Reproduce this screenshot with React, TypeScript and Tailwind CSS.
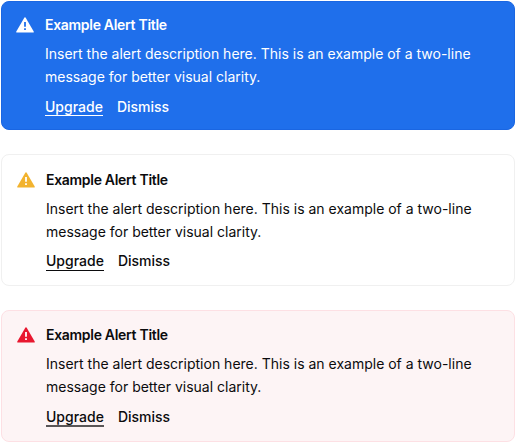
import { clsx } from "clsx";

type Alert = { id: string; card: string; icon: string; mark: string; actions: string; rule: string };

const alerts: Alert[] = [
  { id: "info", card: "h-[129px] mb-6 border-[#1a66e2] bg-[#1f6feb] text-white pl-[14px]", icon: "text-white", mark: "#1f6feb", actions: "mt-[9px]", rule: "-mt-[2px] h-px bg-white" },
  { id: "warning", card: "h-[132px] mb-6 border-[#f0f0f0] bg-white text-[#0b0b0d] pl-[15px] pt-[2px]", icon: "text-[#f2b32f]", mark: "#ffffff", actions: "mt-2", rule: "-mt-px h-px bg-[#0b0b0d]" },
  { id: "error", card: "h-[132px] border-[#fde0e4] bg-[#fdf4f5] text-[#0b0b0d] pl-[15px] pt-px", icon: "text-[#e8172f]", mark: "#ffffff", actions: "mt-[9px]", rule: "-mt-[2px] h-[2px] bg-[#5a5657]" },
];

function WarningIcon({ className, mark }: { className: string; mark: string }) {
  return (
    <svg className={clsx("mt-[15px] h-4 w-[18px] shrink-0", className)} viewBox="0 0 18 16" aria-hidden="true">
      <path d="M8.3.7Q9 -.3 9.7.7L17.7 14.5Q18.1 15.6 17 15.6H1Q-.1 15.6.3 14.5Z" fill="currentColor" />
      <path d="M8.1 5h1.8v4.7H8.1zM8.1 11.2h1.8V13H8.1z" fill={mark} />
    </svg>
  );
}

function AlertCard({ alert }: { alert: Alert }) {
  return (
    <section className={clsx("flex rounded-[8px] border", alert.card)}>
      <WarningIcon className={alert.icon} mark={alert.mark} />
      <div className="ml-[11px] pt-[13px]">
        <h2 className="text-sm leading-[20px] font-semibold tracking-[-0.3px] whitespace-nowrap">Example Alert Title</h2>
        <p className="mt-[7px] text-sm leading-[23px] whitespace-nowrap">
          Insert the alert description here. This is an example of a two-line
          <br />
          message for better visual clarity.
        </p>
        <div className={clsx("flex gap-[14px] text-sm leading-[20px] font-medium", alert.actions)}>
          <button className="flex flex-col">
            Upgrade
            <span className={clsx("w-full", alert.rule)} />
          </button>
          <button className="self-start">Dismiss</button>
        </div>
      </div>
    </section>
  );
}

export default function App() {
  return (
    <main className="h-[442px] w-[516px] overflow-hidden bg-white px-px pt-px font-['Inter','Liberation_Sans',sans-serif]">
      {alerts.map((alert) => (
        <AlertCard key={alert.id} alert={alert} />
      ))}
    </main>
  );
}
